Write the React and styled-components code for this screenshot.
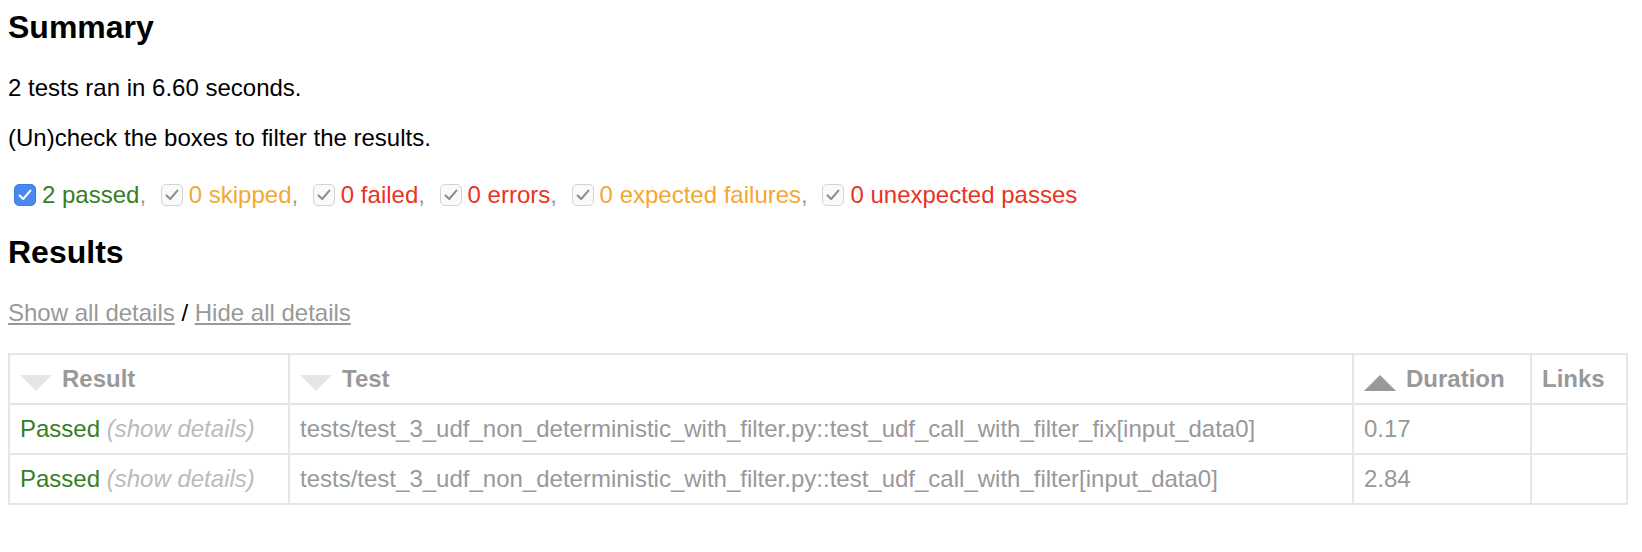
import React from "react";
import styled, { createGlobalStyle, css } from "styled-components";

const GlobalStyle = createGlobalStyle`
  html, body {
    margin: 0;
    padding: 0;
    background: #ffffff;
  }
  body {
    font-family: "Liberation Sans", Arial, Helvetica, sans-serif;
    font-size: 24px;
    color: #999999;
  }
`;

const COLORS = {
  passed: "#377e22",
  skipped: "#f4a733",
  failed: "#ea3323",
  error: "#ea3323",
  xfailed: "#f4a733",
  xpassed: "#ea3323",
};

const Page = styled.div`
  padding: 9px 0 40px 8px;
`;

const Heading = styled.h2`
  margin: ${(p) => p.$top || 0}px 0 0 0;
  font-size: 32px;
  line-height: 36px;
  font-weight: bold;
  color: #000000;
`;

const Para = styled.p`
  margin: ${(p) => p.$top || 0}px 0 0 0;
  font-size: 24px;
  line-height: 28px;
  color: #000000;
`;

const FilterRow = styled.div`
  display: flex;
  align-items: center;
  margin-top: 29px;
  height: 28px;
  font-size: 24px;
  line-height: 28px;
`;

const FilterItem = styled.span`
  display: inline-flex;
  align-items: center;
  white-space: pre;
`;

const Box = styled.span`
  display: inline-flex;
  align-items: center;
  justify-content: center;
  box-sizing: border-box;
  width: 22px;
  height: 22px;
  border-radius: 5px;
  margin: 0 6px 0 ${(p) => (p.$first ? 6 : 8)}px;
  ${(p) =>
    p.$active
      ? css`
          background: #4a88f2;
          border: 1px solid #3f7be0;
        `
      : css`
          background: #fafafa;
          border: 1px solid #d3d3d3;
        `}
`;

const Label = styled.span`
  color: ${(p) => COLORS[p.$kind]};
`;

const Sep = styled.span`
  color: #999999;
`;

const LinkRow = styled.p`
  margin: 29px 0 0 0;
  font-size: 24px;
  line-height: 28px;
  color: #000000;
`;

const TextLink = styled.a`
  color: #999999;
  text-decoration: underline;
  cursor: pointer;
`;

const Table = styled.table`
  margin-top: 26px;
  width: 1620px;
  border-collapse: collapse;
  table-layout: fixed;
  border: 2px solid #e6e6e6;
  color: #999999;
  font-size: 24px;
  line-height: 28px;
`;

const Th = styled.th`
  padding: 10px;
  border: 2px solid #e6e6e6;
  text-align: left;
  font-weight: bold;
  color: #999999;
  white-space: nowrap;
`;

const Td = styled.td`
  padding: 10px;
  border: 2px solid #e6e6e6;
  text-align: left;
  white-space: nowrap;
`;

const SortIcon = styled.span`
  float: left;
  width: 0;
  height: 0;
  margin-top: 10px;
  margin-right: 10px;
  border-left: 16px solid transparent;
  border-right: 16px solid transparent;
  ${(p) =>
    p.$dir === "asc"
      ? css`
          border-bottom: 16px solid #999999;
        `
      : css`
          border-top: 16px solid #e6e6e6;
        `}
`;

const ResultText = styled.span`
  color: ${(p) => COLORS[p.$kind]};
`;

const Expander = styled.span`
  color: #bbbbbb;
  font-style: italic;
  cursor: pointer;
`;

function Check({ active }) {
  return (
    <svg width="14" height="12" viewBox="0 0 14 12" aria-hidden="true">
      <polyline
        points="1.6,6.4 5.2,10 12.4,1.6"
        fill="none"
        stroke={active ? "#ffffff" : "#8e8e8e"}
        strokeWidth="2.1"
        strokeLinecap="round"
        strokeLinejoin="round"
      />
    </svg>
  );
}

const filters = [
  { kind: "passed", text: "2 passed", active: true },
  { kind: "skipped", text: "0 skipped" },
  { kind: "failed", text: "0 failed" },
  { kind: "error", text: "0 errors" },
  { kind: "xfailed", text: "0 expected failures" },
  { kind: "xpassed", text: "0 unexpected passes" },
];

const rows = [
  {
    test: "tests/test_3_udf_non_deterministic_with_filter.py::test_udf_call_with_filter_fix[input_data0]",
    duration: "0.17",
  },
  {
    test: "tests/test_3_udf_non_deterministic_with_filter.py::test_udf_call_with_filter[input_data0]",
    duration: "2.84",
  },
];

export default function App() {
  return (
    <Page>
      <GlobalStyle />
      <Heading>Summary</Heading>
      <Para $top={29}>2 tests ran in 6.60 seconds.</Para>
      <Para $top={22}>(Un)check the boxes to filter the results.</Para>
      <FilterRow>
        {filters.map((f, i) => (
          <FilterItem key={f.kind}>
            <Box $active={f.active} $first={i === 0}>
              <Check active={f.active} />
            </Box>
            <Label $kind={f.kind}>{f.text}</Label>
            {i < filters.length - 1 && <Sep>, </Sep>}
          </FilterItem>
        ))}
      </FilterRow>
      <Heading $top={25}>Results</Heading>
      <LinkRow>
        <TextLink>Show all details</TextLink> / <TextLink>Hide all details</TextLink>
      </LinkRow>
      <Table>
        <colgroup>
          <col style={{ width: 280 }} />
          <col style={{ width: 1064 }} />
          <col style={{ width: 178 }} />
          <col style={{ width: 96 }} />
        </colgroup>
        <thead>
          <tr>
            <Th>
              <SortIcon $dir="inactive" />
              Result
            </Th>
            <Th>
              <SortIcon $dir="inactive" />
              Test
            </Th>
            <Th>
              <SortIcon $dir="asc" />
              Duration
            </Th>
            <Th>Links</Th>
          </tr>
        </thead>
        <tbody>
          {rows.map((r) => (
            <tr key={r.test}>
              <Td>
                <ResultText $kind="passed">Passed</ResultText>
                <Expander> (show details)</Expander>
              </Td>
              <Td>{r.test}</Td>
              <Td>{r.duration}</Td>
              <Td></Td>
            </tr>
          ))}
        </tbody>
      </Table>
    </Page>
  );
}
